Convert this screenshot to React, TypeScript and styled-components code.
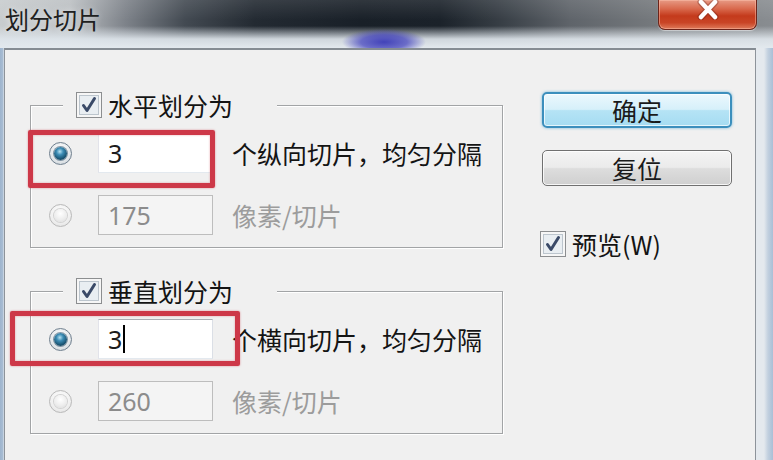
import * as React from 'react';
import styled, { createGlobalStyle } from 'styled-components';

const GlobalStyle = createGlobalStyle`
  html, body {
    margin: 0;
    padding: 0;
    overflow: hidden;
    background: #e4e9ee;
  }
  * {
    box-sizing: border-box;
  }
`;

const CJK = `"Noto Sans CJK SC", "Noto Sans", sans-serif`;
const LATIN = `"Noto Sans", "Noto Sans CJK SC", sans-serif`;

type RowData = {
  value: string;
  label: string;
  active: boolean;
  caret?: boolean;
};

type GroupData = {
  title: string;
  rows: RowData[];
  mark: { left: number; top: number; w: number; h: number };
};

const groups: GroupData[] = [
  {
    title: '水平划分为',
    rows: [
      { value: '3', label: '个纵向切片，均匀分隔', active: true },
      { value: '175', label: '像素/切片', active: false }
    ],
    mark: { left: -3, top: -3, w: 187, h: 58 }
  },
  {
    title: '垂直划分为',
    rows: [
      { value: '3', label: '个横向切片，均匀分隔', active: true, caret: true },
      { value: '260', label: '像素/切片', active: false }
    ],
    mark: { left: -21, top: -8, w: 230, h: 55 }
  }
];

const CheckBox = () => (
  <CheckIcon width='26' height='26' viewBox='0 0 26 26'>
    <rect x='0.5' y='0.5' width='25' height='25' fill='#f6f6f6' stroke='#8c8e90' />
    <rect x='3.5' y='3.5' width='19' height='19' fill='#e9eef2' stroke='#bcc5cd' />
    <path d='M7.5 13.5 L11 18.5 L18.5 6.5' fill='none' stroke='#3a4a68' strokeWidth='3' strokeLinecap='round' strokeLinejoin='round' />
  </CheckIcon>
);

const App = () => {
  return (
    <Window>
      <GlobalStyle />
      <TitleBar>
        <Title>划分切片</Title>
        <CloseButton>
          <svg width='26' height='20' viewBox='0 0 26 20'>
            <path d='M6 2 L20 17 M20 2 L6 17' stroke='#5a1a10' strokeWidth='7' strokeLinecap='round' opacity='0.3' />
            <path d='M6 2 L20 17 M20 2 L6 17' stroke='#ffffff' strokeWidth='4.5' strokeLinecap='round' />
          </svg>
        </CloseButton>
      </TitleBar>

      <Frame>
        <Client>
          <LeftColumn>
            {groups.map((g) => (
              <Group key={g.title}>
                <Legend>
                  <CheckBox />
                  <LegendText>{g.title}</LegendText>
                </Legend>
                <Rows>
                  {g.rows.map((r, i) => (
                    <Row key={r.value}>
                      <Radio $checked={r.active} />
                      <TextBox $disabled={!r.active}>
                        {r.value}
                        {r.caret && <Caret />}
                      </TextBox>
                      <RowLabel $disabled={!r.active}>{r.label}</RowLabel>
                      {i === 0 && (
                        <Highlight $left={g.mark.left} $top={g.mark.top} $w={g.mark.w} $h={g.mark.h} />
                      )}
                    </Row>
                  ))}
                </Rows>
              </Group>
            ))}
          </LeftColumn>

          <RightColumn>
            <Button $primary>确定</Button>
            <Button>复位</Button>
            <Preview>
              <CheckBox />
              <PreviewText>预览(W)</PreviewText>
            </Preview>
          </RightColumn>
        </Client>
      </Frame>
    </Window>
  );
};

export default App;

const Window = styled.div`
  width: 773px;
  height: 460px;
  display: flex;
  flex-direction: column;
  overflow: hidden;
  background: linear-gradient(to right, #9db4ce 0px, #a9bdd3 3px, #e4e9ee 4px, #e4e9ee 764px, #c2d0df 768px, #aabfd6 773px);
`;

// aero glass title, with the blue smudge from the window behind
const TitleBar = styled.div`
  height: 48px;
  flex-shrink: 0;
  display: flex;
  align-items: flex-start;
  background:
    radial-gradient(ellipse 42px 13px at 384px 42px, rgba(58, 58, 182, 0.95) 0%, rgba(70, 70, 190, 0.75) 55%, rgba(80, 80, 200, 0) 100%),
    linear-gradient(to bottom, rgba(224, 230, 236, 0) 0px, rgba(224, 230, 236, 0) 26px, rgba(222, 229, 235, 0.92) 39px, #e3e9ee 48px),
    linear-gradient(to bottom, rgba(255, 255, 255, 0.1) 0px, rgba(0, 0, 0, 0) 20px),
    linear-gradient(to right, #c8ccce 0px, #bcc0c3 70px, #7e838a 125px, #434a52 185px, #232a32 255px, #192028 360px, #1b222a 440px, #373e45 500px, #5f646a 570px, #74787c 650px, #898d91 773px);
`;

const Title = styled.div`
  padding: 7px 0 0 5px;
  font-family: ${CJK};
  font-size: 24px;
  line-height: 24px;
  color: #202020;
  text-shadow: 0 0 6px rgba(255, 255, 255, 0.6);
`;

const CloseButton = styled.div`
  margin-left: auto;
  margin-right: 16px;
  width: 99px;
  height: 30px;
  display: flex;
  justify-content: center;
  align-items: flex-start;
  border: 1px solid #6c241a;
  border-top: none;
  border-radius: 0 0 7px 7px;
  background: linear-gradient(to bottom, #e79a84 0%, #d9694d 30%, #c43a1c 55%, #c94526 78%, #df7a5a 100%);
  box-shadow: inset 0 0 0 1px rgba(255, 200, 180, 0.45), 0 1px 1px rgba(255, 255, 255, 0.5);
`;

const Frame = styled.div`
  flex: 1;
  display: flex;
  padding: 0 17px 0 4px;
`;

const Client = styled.div`
  flex: 1;
  display: flex;
  align-items: flex-start;
  background: #f0f0f0;
  border-top: 2px solid #858c93;
  border-left: 1px solid #8d939a;
  border-right: 1px solid #8d939a;
`;

const LeftColumn = styled.div`
  display: flex;
  flex-direction: column;
  gap: 43px;
  padding: 55px 0 0 25px;
`;

const Group = styled.div`
  width: 473px;
  border: 1px solid #a2a4a6;
  box-shadow: inset 1px 1px 0 #ffffff, 1px 1px 0 #ffffff;
  padding-bottom: 12px;
`;

const Legend = styled.div`
  display: flex;
  align-items: center;
  gap: 6px;
  width: fit-content;
  height: 26px;
  margin: -14px 0 0 32px;
  padding: 0 44px 0 13px;
  background: #f0f0f0;
`;

const CheckIcon = styled.svg`
  display: block;
  flex-shrink: 0;
`;

const LegendText = styled.span`
  font-family: ${CJK};
  font-size: 25px;
  line-height: 26px;
  color: #141414;
`;

const Rows = styled.div`
  display: flex;
  flex-direction: column;
  gap: 22px;
  margin-top: 15px;
`;

const Row = styled.div`
  position: relative;
  display: flex;
  align-items: center;
  height: 40px;
  padding-left: 18px;
`;

const Radio = styled.span<{ $checked: boolean }>`
  position: relative;
  width: 23px;
  height: 23px;
  flex-shrink: 0;
  border-radius: 50%;
  border: 1px solid ${(p) => (p.$checked ? '#6f7f8e' : '#b9b9b9')};
  background: ${(p) => (p.$checked
    ? 'radial-gradient(circle at 50% 35%, #ffffff 0%, #e3e7ea 60%, #c9d0d6 100%)'
    : 'radial-gradient(circle at 50% 35%, #ffffff 0%, #efefef 60%, #dddddd 100%)')};

  &::after {
    content: '';
    position: absolute;
    left: 4px;
    top: 4px;
    width: 13px;
    height: 13px;
    border-radius: 50%;
    background: ${(p) => (p.$checked
      ? 'radial-gradient(circle at 45% 35%, #b7e2f2 0%, #3d8db5 30%, #1a5574 65%, #0f3246 100%)'
      : 'radial-gradient(circle at 50% 35%, #ffffff 0%, #ececec 60%, #d6d6d6 100%)')};
    box-shadow: ${(p) => (p.$checked ? '0 0 0 1px rgba(20, 60, 90, 0.5)' : '0 0 0 1px #d2d2d2')};
  }
`;

const TextBox = styled.div<{ $disabled: boolean }>`
  display: flex;
  align-items: center;
  width: 115px;
  height: 40px;
  margin-left: 26px;
  padding-left: 9px;
  flex-shrink: 0;
  font-family: ${LATIN};
  font-size: 25px;
  color: ${(p) => (p.$disabled ? '#8c8c8c' : '#1c1c1c')};
  background: ${(p) => (p.$disabled ? '#f4f4f4' : '#ffffff')};
  border: 1px solid;
  border-color: ${(p) => (p.$disabled ? '#bdbdbd' : '#abadb3 #dbdfe6 #e3e9ef #e2e3ea')};
`;

const Caret = styled.span`
  width: 2px;
  height: 28px;
  margin-left: 1px;
  background: #000000;
`;

const RowLabel = styled.span<{ $disabled: boolean }>`
  margin-left: 19px;
  font-family: ${CJK};
  font-size: 25px;
  line-height: 26px;
  white-space: nowrap;
  color: ${(p) => (p.$disabled ? '#9c9c9c' : '#141414')};
`;

const Highlight = styled.span<{ $left: number; $top: number; $w: number; $h: number }>`
  position: absolute;
  left: ${(p) => p.$left}px;
  top: ${(p) => p.$top}px;
  width: ${(p) => p.$w}px;
  height: ${(p) => p.$h}px;
  border: 5px solid #cd3848;
  border-radius: 2px;
  box-shadow: 0 0 2px rgba(205, 56, 72, 0.6), inset 0 0 2px rgba(205, 56, 72, 0.5);
  pointer-events: none;
`;

const RightColumn = styled.div`
  display: flex;
  flex-direction: column;
  padding: 42px 0 0 39px;
`;

const Button = styled.div<{ $primary?: boolean }>`
  width: 190px;
  height: 36px;
  margin-bottom: 22px;
  display: flex;
  align-items: center;
  justify-content: center;
  font-family: ${CJK};
  font-size: 25px;
  color: #1a1a1a;
  border-radius: 5px;
  border: ${(p) => (p.$primary ? '2px solid #3c8fbd' : '1px solid #707070')};
  background: ${(p) => (p.$primary
    ? 'linear-gradient(to bottom, #ecf8fd 0%, #d6f0fa 48%, #b5e3f5 52%, #a5dcf2 100%)'
    : 'linear-gradient(to bottom, #f4f4f4 0%, #ebebeb 48%, #dddddd 52%, #cfcfcf 100%)')};
  box-shadow: ${(p) => (p.$primary
    ? '0 0 3px rgba(60, 160, 210, 0.7), inset 0 0 0 1px rgba(255, 255, 255, 0.7)'
    : 'inset 0 0 0 1px rgba(255, 255, 255, 0.8)')};
`;

const Preview = styled.div`
  display: flex;
  align-items: center;
  gap: 6px;
  margin: 23px 0 0 -2px;
`;

const PreviewText = styled.span`
  font-family: ${CJK};
  font-size: 25px;
  line-height: 26px;
  color: #141414;
`;
